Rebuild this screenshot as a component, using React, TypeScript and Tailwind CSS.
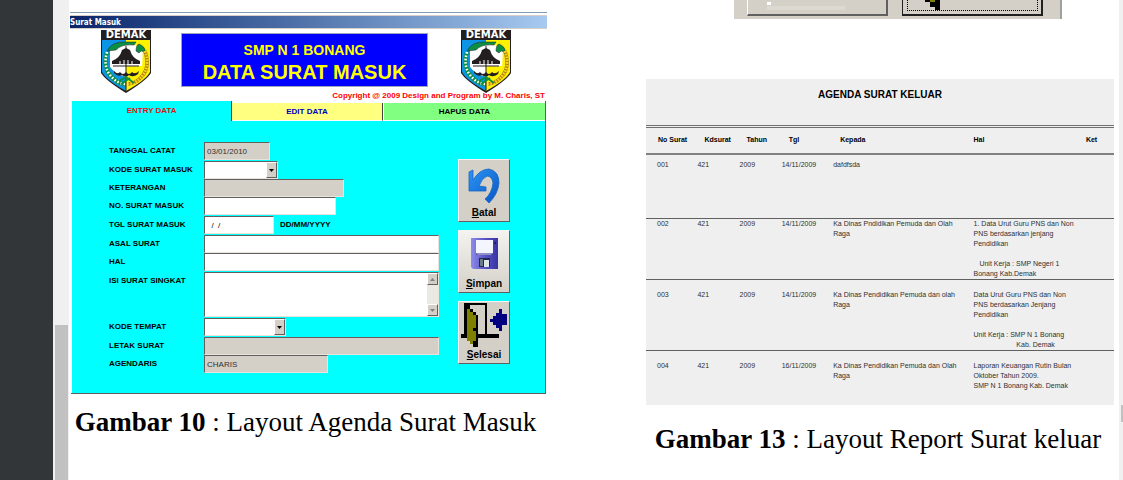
import React from "react";

const ui = "font-['Liberation_Sans',sans-serif]";
const sunken =
  "rounded-none border border-t-[#606060] border-l-[#606060] border-r-[#e8e4dc] border-b-[#e8e4dc] outline-none";

function DemakLogo() {
  return (
    <svg viewBox="0 0 50 63" className="h-[63px] w-[50px] shrink-0" role="img">
      <path d="M0 0H50V43Q46 50 25 63Q4 50 0 43Z" fill="#231f20" />
      <path d="M1 10H25V61Q5 50 1 42Z" fill="#0d94e4" />
      <path d="M25 10H49V42Q45 50 25 61Z" fill="#fff200" />
      <path d="M9 19Q25 8 42 19L41 38Q34 46 25 47Q14 44 9 37Z" fill="#fff" />
      <path d="M25 36H41Q40 44 25 48Z" fill="#fff200" />
      <path d="M6 21Q11 11 25 12L35 12L33 15Q20 14 15 20Z" fill="#0b8f43" stroke="#231f20" strokeWidth=".5" />
      <path d="M35 21Q35 15 38 14Q45 17 44 22L40 21L38 23Z" fill="#0b8f43" stroke="#231f20" strokeWidth=".5" />
      <path d="M6 22Q2 36 9 45T25 54" fill="none" stroke="#0b8f43" strokeWidth="4" />
      <path d="M6 22Q2 36 9 45T25 54" fill="none" stroke="#fff" strokeWidth="2.6" strokeDasharray="1.6 1.8" />
      <path d="M44 21Q49 36 42 45T27 54" fill="none" stroke="#a07a10" strokeWidth="3.6" />
      <path d="M44 21Q49 36 42 45T27 54" fill="none" stroke="#f8d020" strokeWidth="2.8" strokeDasharray="1.8 1" />
      <path d="M25 13V18L29 20Q31 28 39 31V34H11V31Q19 28 21 20L25 18Z" fill="#231f20" />
      <path d="M15 34V37M19 31V37M23 30V37M27 30V37M31 31V37M35 34V37" stroke="#fff" strokeWidth="1" />
      <path d="M12 36H38M25 16V61" stroke="#231f20" strokeWidth="1" />
      <path d="M13 41Q16 45 19 42Q22 46 25 42Q28 46 31 42Q34 45 38 41L37 44Q32 48 28 45Q25 48 21 45Q17 47 13 43Z" fill="#231f20" />
      <path d="M18 51L25 47L33 53M20 54L29 48" stroke="#0b8f43" strokeWidth="1.8" fill="none" />
      <text x="25" y="8.4" textAnchor="middle" fill="#fff" fontSize="10" fontWeight="700" fontFamily="DejaVu Sans, sans-serif">
        DEMAK
      </text>
    </svg>
  );
}

function UndoIcon() {
  return (
    <svg viewBox="0 0 34 36" className="h-[36px] w-[34px]" aria-hidden="true">
      <defs>
        <linearGradient id="undo" x1="0" y1="0" x2="1" y2="1">
          <stop offset="0" stopColor="#2b96f5" />
          <stop offset="1" stopColor="#0a55c4" />
        </linearGradient>
      </defs>
      <path
        d="M2 4L6 2V12Q13 1 22 1Q32 3 32 15Q31 26 22 35L18 31Q25 25 26 15Q25 8 20 8Q15 10 12 18L19 19V23H2Z"
        fill="url(#undo)"
        stroke="#1565c0"
        strokeWidth=".8"
      />
    </svg>
  );
}

function FloppyIcon() {
  return (
    <svg viewBox="0 0 27 31" className="h-[31px] w-[27px]" aria-hidden="true">
      <defs>
        <linearGradient id="floppy" x1="0" y1="0" x2="1" y2="0">
          <stop offset="0" stopColor="#8f8de8" />
          <stop offset=".5" stopColor="#5a55c8" />
          <stop offset="1" stopColor="#3a33a0" />
        </linearGradient>
      </defs>
      <path d="M0 0H27V31H2L0 29Z" fill="url(#floppy)" />
      <path d="M5 2H22V15L20 17H7L5 15Z" fill="#f4f6ff" />
      <path d="M5 16H22" stroke="#2c2a86" />
      <path d="M23 4H25V6H23Z" fill="#201c60" />
      <path d="M8 20H19V29H8Z" fill="#22284c" />
      <path d="M13 22H18V29H13Z" fill="#dfe6ea" />
      <path d="M9 21H12V28H9Z" fill="#6a7c88" />
    </svg>
  );
}

function DoorIcon() {
  return (
    <svg viewBox="0 0 47 45" className="h-[45px] w-[47px]" aria-hidden="true" shapeRendering="crispEdges">
      <path d="M3 0H26V31H38V35H16V31H24V2H9V31H3V35H0V31H3Z" fill="#000" />
      <path d="M6 3H9V6H12V9H15V12H17V44H12V41H9V38H6V35H3V3Z" fill="#000" />
      <path d="M6 6H9V9H12V12H15V25H12V28H15V38H12V41H9V38H6Z" fill="#808000" />
      <path d="M29 16H32V13H35V10H38V6H41V11H46V22H41V28H38V25H35V22H32V19H29Z" fill="#000080" />
    </svg>
  );
}

function ArrowBox({ up = false, dim = false }: { up?: boolean; dim?: boolean }) {
  return (
    <span
      aria-hidden="true"
      className="pointer-events-none flex w-[11px] shrink-0 items-center justify-center border border-t-white border-l-white border-r-[#606060] border-b-[#606060] bg-[#d4d0c8]"
    >
      <svg viewBox="0 0 5 3" className="h-[3px] w-[5px]">
        <path d={up ? "M0 3L2.500 0L5 3Z" : "M0 0L2.500 3L5 0Z"} fill={dim ? "#808080" : "#000"} />
      </svg>
    </span>
  );
}

function Field({ id, label, height, children }: { id: string; label: string; height: string; children: React.ReactNode }) {
  return (
    <div className={`grid grid-cols-[95px_1fr] ${height}`}>
      <label htmlFor={id} className="pt-[3px] text-[8px] leading-[11px] font-bold whitespace-nowrap">
        {label}
      </label>
      <div className="flex items-start">{children}</div>
    </div>
  );
}

function Picker({ id, width }: { id: string; width: string }) {
  return (
    <div className={`flex h-[18px] bg-white ${sunken} ${width}`}>
      <select id={id} className="min-w-0 flex-1 appearance-none bg-white outline-none">
        <option />
      </select>
      <ArrowBox />
    </div>
  );
}

const actions = [
  { label: "Batal", icon: <UndoIcon />, face: "bg-[#d4d0c8] pt-[8px]" },
  { label: "Simpan", icon: <FloppyIcon />, face: "bg-linear-to-b from-[#f4f3f0] to-[#d4d0c8] pt-[7px]" },
  { label: "Selesai", icon: <DoorIcon />, face: "bg-[#d4d0c8] pt-[1px]" },
];

function EntryWindow() {
  const text = `h-[18px] px-[2px] text-[8px] leading-[14px] ${sunken}`;
  return (
    <section className={`${ui} text-black`}>
      <div className="border-t border-[#7f9db9] pt-[2px]">
        <h2 className="h-[14px] overflow-hidden border-t border-b border-[#d4d0c8] bg-linear-to-r from-[#0a246a] to-[#a6caf0] font-['DejaVu_Sans_Condensed','DejaVu_Sans',sans-serif] text-[8px] leading-[13px] font-bold text-white">
          Surat Masuk
        </h2>
      </div>
      <header className="flex h-[62px] items-start pr-[36px] pl-[31px] pt-px">
        <DemakLogo />
        <div className="mt-[3px] mr-auto ml-[30px] flex h-[54px] w-[247px] flex-col items-center border border-[#a0a0c0] bg-[#0000ff] pt-[7px] font-bold text-[#ffff00]">
          <p className="text-[14px] leading-[18px]">SMP N 1 BONANG</p>
          <h1 className="text-[20px] leading-[26px]">DATA SURAT MASUK</h1>
        </div>
        <DemakLogo />
      </header>
      <p className="pr-[2px] text-right text-[8px] leading-[10px] font-bold text-[#ff0000]">
        Copyright @ 2009 Design and Program by M. Charis, ST
      </p>
      <div className="mr-px ml-px border-r border-b border-[#606060]">
        <div role="tablist" className="grid grid-cols-[161fr_150fr_162fr] items-end text-[8px] leading-[12px] font-bold">
          <button role="tab" aria-selected="true" className="h-[20px] border-r border-l border-r-[#404040] border-l-white bg-[#00ffff] text-[#e01010]">
            ENTRY DATA
          </button>
          <button role="tab" aria-selected="false" className="h-[18px] border-r border-b border-r-[#404040] border-b-white bg-[#ffff80] text-[#0000c0]">
            EDIT DATA
          </button>
          <button role="tab" aria-selected="false" className="h-[18px] border-b border-l border-b-white border-l-white bg-[#80ff80]">
            HAPUS DATA
          </button>
        </div>
        <form className="flex gap-[19px] border-l border-white bg-[#00ffff] pr-[35px] pb-[20px] pl-[37px]">
          <div className="min-w-0 flex-1 pt-[21px]">
            <Field id="tanggal" label="TANGGAL CATAT" height="h-[19px]">
              <input id="tanggal" readOnly defaultValue="03/01/2010" className={`${text} w-[66px] bg-[#d4d0c8] text-[#303030]`} />
            </Field>
            <Field id="kode" label="KODE SURAT MASUK" height="h-[18px]">
              <Picker id="kode" width="w-[74px]" />
            </Field>
            <Field id="keterangan" label="KETERANGAN" height="h-[18px]">
              <input id="keterangan" readOnly className={`${text} w-[140px] bg-[#d4d0c8]`} />
            </Field>
            <Field id="nomor" label="NO. SURAT MASUK" height="h-[19px]">
              <input id="nomor" className={`${text} w-[132px] bg-white`} />
            </Field>
            <Field id="tgl" label="TGL SURAT MASUK" height="h-[19px]">
              <input id="tgl" defaultValue="  /  /" className={`${text} w-[70px] bg-white`} />
              <span className="pt-[3px] pl-[6px] text-[8px] leading-[12px] font-bold">DD/MM/YYYY</span>
            </Field>
            <Field id="asal" label="ASAL SURAT" height="h-[18px]">
              <input id="asal" className={`${text} w-full bg-white`} />
            </Field>
            <Field id="hal" label="HAL" height="h-[19px]">
              <input id="hal" className={`${text} w-full bg-white`} />
            </Field>
            <Field id="isi" label="ISI SURAT SINGKAT" height="h-[46px]">
              <div className={`flex h-[45px] w-full bg-white ${sunken}`}>
                <textarea id="isi" className="min-w-0 flex-1 resize-none bg-white outline-none" />
                <div className="grid grid-rows-[12px_1fr_12px] bg-[#ebe9e4]">
                  <ArrowBox up dim />
                  <span />
                  <ArrowBox dim />
                </div>
              </div>
            </Field>
            <Field id="tempat" label="KODE TEMPAT" height="h-[19px]">
              <Picker id="tempat" width="w-[82px]" />
            </Field>
            <Field id="letak" label="LETAK SURAT" height="h-[18px]">
              <input id="letak" readOnly className={`${text} w-full bg-[#d4d0c8]`} />
            </Field>
            <Field id="agendaris" label="AGENDARIS" height="h-[18px]">
              <input id="agendaris" readOnly defaultValue="CHARIS" className={`${text} w-[124px] bg-[#d4d0c8] text-[#303030]`} />
            </Field>
          </div>
          <div className="flex w-[52px] flex-col gap-[8px] pt-[38px]">
            {actions.map((a) => (
              <button
                key={a.label}
                type="button"
                className={`flex h-[63px] flex-col items-center justify-between border border-t-[#f4f4f4] border-l-[#f4f4f4] border-r-[#606060] border-b-[#606060] pb-[2px] text-[10px] leading-[12px] font-bold ${a.face}`}
              >
                {a.icon}
                <span>
                  <u>{a.label[0]}</u>
                  {a.label.slice(1)}
                </span>
              </button>
            ))}
          </div>
        </form>
      </div>
    </section>
  );
}

function ButtonStrip() {
  return (
    <div className="mr-[52px] ml-[88px] grid h-[19px] grid-cols-2 gap-[14px] border-r-2 border-[#a0a0a0] bg-[#d4d0c8] pr-[17px] pb-[3px] pl-[13px]">
      <button aria-label="Simpan" className="border-r-2 border-b-2 border-l border-r-[#606060] border-b-[#606060] border-l-white pl-[19px]">
        <span className="mb-[2px] block h-[8px] w-[78px] border-b-4 border-[#dbd9d0]">
          <span className="block h-[3px] w-[4px] bg-white" />
        </span>
      </button>
      <button aria-label="Selesai" className="border-r-2 border-b-2 border-l border-[#202020] pr-[3px] pb-[3px] pl-[4px]">
        <span className="block h-[11px] border border-t-0 border-dotted border-black pl-[17px]">
          <svg viewBox="0 0 15 10" className="h-[10px] w-[15px]" shapeRendering="crispEdges">
            <path d="M0 0H15V10H10V7H5V2H0Z" fill="#000" />
            <path d="M5 0H10V2H5Z" fill="#808000" />
          </svg>
        </span>
      </button>
    </div>
  );
}

const columns = ["No Surat", "Kdsurat", "Tahun", "Tgl", "Kepada", "Hal", "Ket"];
const rows = [
  { no: "001", tgl: "14/11/2009", kepada: "dafdfsda", hal: "", size: "h-[65px]", pad: "pt-[5px]" },
  {
    no: "002",
    tgl: "14/11/2009",
    kepada: "Ka Dinas Pndidikan Pemuda dan Olah\nRaga",
    hal: "1. Data Urut Guru PNS dan Non\nPNS berdasarkan jenjang\nPendidikan\n\n   Unit Kerja : SMP Negeri 1\nBonang Kab.Demak",
    size: "h-[61px]",
    pad: "pt-0",
  },
  {
    no: "003",
    tgl: "14/11/2009",
    kepada: "Ka Dinas Pendidikan Pemuda dan olah\nRaga",
    hal: "Data Urut Guru PNS dan Non\nPNS berdasarkan Jenjang\nPendidikan\n\nUnit Kerja : SMP N 1 Bonang\n                      Kab. Demak",
    size: "h-[71px]",
    pad: "pt-[10px]",
  },
  {
    no: "004",
    tgl: "16/11/2009",
    kepada: "Ka Dinas Pendidikan Pemuda dan Olah\nRaga",
    hal: "Laporan Keuangan Rutin Bulan\nOktober Tahun 2009.\nSMP N 1 Bonang Kab. Demak",
    size: "h-[54px]",
    pad: "pt-[10px]",
  },
];

function Report() {
  return (
    <section className={`mt-[60px] bg-[#efefef] ${ui}`}>
      <h2 className="pt-[9px] pb-[23px] text-center text-[10px] leading-[14px] font-bold text-black">
        AGENDA SURAT KELUAR
      </h2>
      <table className="w-full table-fixed border-collapse border-t-[3px] border-double border-[#707070] text-left text-[7px] leading-[10px] text-[#303030]">
        <colgroup>
          <col className="w-[11%]" />
          <col className="w-[9%]" />
          <col className="w-[9%]" />
          <col className="w-[11%]" />
          <col className="w-[30%]" />
          <col className="w-[24%]" />
          <col className="w-[6%]" />
        </colgroup>
        <thead>
          <tr className="h-[27px] border-b-2 border-[#808080] text-black">
            {columns.map((c, i) => (
              <th key={c} className={`p-0 whitespace-nowrap ${i === 0 ? "pl-[12px]" : i < 5 ? "pl-[7px]" : ""}`}>
                {c}
              </th>
            ))}
          </tr>
        </thead>
        <tbody>
          {rows.map((r) => (
            <tr key={r.no} className={`border-b border-[#606060] align-top whitespace-pre last:border-b-0 ${r.size}`}>
              <td className={`pl-[11px] ${r.pad}`}>{r.no}</td>
              <td className={r.pad}>421</td>
              <td className={r.pad}>2009</td>
              <td className={r.pad}>{r.tgl}</td>
              <td className={r.pad}>{r.kepada}</td>
              <td className={r.pad}>{r.hal}</td>
              <td className={r.pad} />
            </tr>
          ))}
        </tbody>
      </table>
    </section>
  );
}

const caption = "text-center font-['Liberation_Serif',serif] text-[27px] leading-[32px] text-black whitespace-nowrap";

export default function App() {
  return (
    <div className="flex min-h-screen bg-white">
      <div className="w-[53px] shrink-0 bg-[#323639]" />
      <div className="flex w-[16px] shrink-0 flex-col justify-end bg-[#f0f0f0] pr-px pl-[2px]">
        <div className="h-[155px] bg-[#c1c1c1]" />
      </div>
      <main className="grid min-w-0 flex-1 grid-cols-[477fr_468fr] gap-x-[99px] pr-[5px] pl-px">
        <figure className="min-w-0 pt-[12px]">
          <EntryWindow />
          <figcaption className={`${caption} mt-[12px] pr-[6px]`}>
            <b>Gambar 10</b> : Layout Agenda Surat Masuk
          </figcaption>
        </figure>
        <figure className="min-w-0">
          <ButtonStrip />
          <Report />
          <figcaption className={`${caption} mt-[18px] pr-[4px]`}>
            <b>Gambar 13</b> : Layout Report Surat keluar
          </figcaption>
        </figure>
      </main>
      <div className="flex w-[4px] shrink-0 flex-col items-end bg-[#f0f0f0] pt-[405px]">
        <div className="h-[17px] w-[2px] bg-[#c1c1c1]" />
      </div>
    </div>
  );
}
